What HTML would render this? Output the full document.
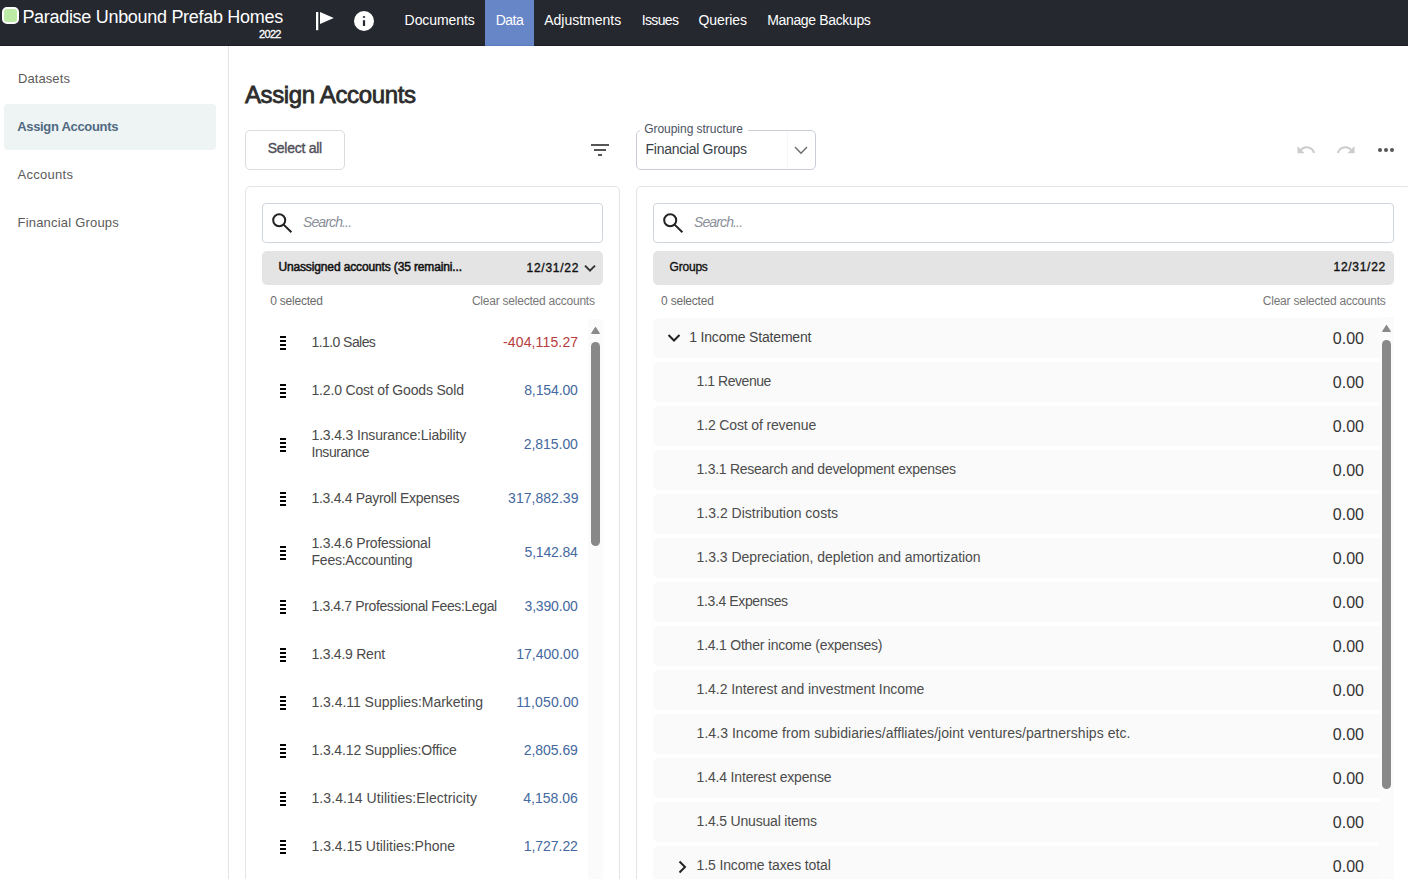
<!DOCTYPE html>
<html><head><meta charset="utf-8"><style>
html,body{margin:0;padding:0;width:1408px;height:879px;overflow:hidden;background:#fff;font-family:"Liberation Sans",sans-serif;}
.t{position:absolute;white-space:nowrap;line-height:1;}
.b{position:absolute;}
</style></head><body>
<div class="b" style="left:0px;top:0px;width:1408px;height:45px;background:#25282f;"></div>
<div class="b" style="left:0px;top:45px;width:1408px;height:1px;background:#1c1e25;"></div>
<div class="b" style="left:2px;top:7px;width:17px;height:17px;box-sizing:border-box;border:2px solid #fff;border-radius:5px;background:#bbeba4;"></div>
<div class="t" style="left:22.40px;top:8.10px;font-size:18px;color:#ffffff;letter-spacing:-0.300px;">Paradise Unbound Prefab Homes</div>
<div class="t" style="left:259.00px;top:29.00px;font-size:11px;color:#ffffff;-webkit-text-stroke:0.3px #ffffff;letter-spacing:-0.667px;">2022</div>
<svg class="b" style="left:310px;top:8px" width="30" height="26" viewBox="0 0 30 26"><rect x="6" y="4" width="2.3" height="18.2" fill="#fff"/><path d="M10 4 L23.8 9.9 L10 16 Z" fill="#fff"/></svg>
<svg class="b" style="left:352px;top:9px" width="24" height="24" viewBox="0 0 24 24"><circle cx="12" cy="12" r="10" fill="#fff"/><rect x="10.9" y="7.2" width="2.2" height="1.6" fill="#25282f"/><rect x="10.9" y="11.2" width="2.2" height="5.8" fill="#25282f"/></svg>
<div class="b" style="left:485px;top:0px;width:49px;height:46px;background:#6786c7;box-shadow:inset 0 -1px 0 #5b7bbf;"></div>
<div class="t" style="left:404.60px;top:13.00px;font-size:14px;color:#ffffff;letter-spacing:-0.075px;">Documents</div>
<div class="t" style="left:495.70px;top:13.00px;font-size:14px;color:#ffffff;letter-spacing:-0.500px;">Data</div>
<div class="t" style="left:544.20px;top:13.00px;font-size:14px;color:#ffffff;">Adjustments</div>
<div class="t" style="left:641.80px;top:13.00px;font-size:14px;color:#ffffff;letter-spacing:-0.660px;">Issues</div>
<div class="t" style="left:698.40px;top:13.00px;font-size:14px;color:#ffffff;letter-spacing:-0.067px;">Queries</div>
<div class="t" style="left:767.20px;top:13.00px;font-size:14px;color:#ffffff;letter-spacing:-0.346px;">Manage Backups</div>
<div class="b" style="left:228px;top:46px;width:1px;height:833px;background:#e3e3e3;"></div>
<div class="b" style="left:4px;top:104px;width:212px;height:46px;background:#eef3f4;border-radius:4px;"></div>
<div class="t" style="left:17.90px;top:71.70px;font-size:13px;color:#5b5b5b;letter-spacing:0.100px;">Datasets</div>
<div class="t" style="left:17.20px;top:119.60px;font-size:13px;color:#4f6a82;font-weight:700;letter-spacing:-0.321px;">Assign Accounts</div>
<div class="t" style="left:17.50px;top:168.20px;font-size:13px;color:#5b5b5b;letter-spacing:0.286px;">Accounts</div>
<div class="t" style="left:17.50px;top:216.00px;font-size:13px;color:#5b5b5b;letter-spacing:0.200px;">Financial Groups</div>
<div class="t" style="left:244.90px;top:83.00px;font-size:24px;color:#2c2c2c;-webkit-text-stroke:0.8px #2c2c2c;letter-spacing:-0.357px;">Assign Accounts</div>
<div class="b" style="left:245px;top:130px;width:100px;height:40px;box-sizing:border-box;border:1px solid #dcdcdc;border-radius:5px;background:#fff;"></div>
<div class="t" style="left:267.70px;top:141.00px;font-size:14px;color:#4e4e58;-webkit-text-stroke:0.35px #4e4e58;letter-spacing:-0.256px;">Select all</div>
<div class="b" style="left:591px;top:144px;width:18px;height:2px;background:#555;"></div>
<div class="b" style="left:594px;top:149px;width:12px;height:2px;background:#555;"></div>
<div class="b" style="left:598px;top:154px;width:4px;height:2px;background:#555;"></div>
<div class="b" style="left:636px;top:130px;width:180px;height:40px;box-sizing:border-box;border:1px solid #c9ced6;border-radius:5px;background:#fff;"></div>
<div class="b" style="left:640px;top:126px;width:108px;height:8px;background:#fff;"></div>
<div class="b" style="left:787px;top:131px;width:1px;height:38px;background:#f7f7f7;"></div>
<div class="t" style="left:644.20px;top:123.40px;font-size:12px;color:#4c5360;letter-spacing:-0.035px;">Grouping structure</div>
<div class="t" style="left:645.60px;top:141.60px;font-size:14px;color:#3a3f4a;letter-spacing:-0.293px;">Financial Groups</div>
<svg class="b" style="left:792px;top:144px" width="18" height="12" viewBox="0 0 18 12"><path d="M3 3 L9 9.2 L15 3" fill="none" stroke="#6b6b6b" stroke-width="1.4"/></svg>
<svg class="b" style="left:1295px;top:140px" width="22" height="16" viewBox="0 0 22 16"><path d="M2.5 6 L2.5 13.2 L9.5 13.2 Z" fill="#cccccc"/><path d="M5.5 10.5 A7.5 7.2 0 0 1 19 13" fill="none" stroke="#cccccc" stroke-width="2"/></svg>
<svg class="b" style="left:1335px;top:140px" width="22" height="16" viewBox="0 0 22 16"><path d="M19.5 6 L19.5 13.2 L12.5 13.2 Z" fill="#cccccc"/><path d="M16.5 10.5 A7.5 7.2 0 0 0 3 13" fill="none" stroke="#cccccc" stroke-width="2"/></svg>
<div class="b" style="left:1378px;top:148px;width:4px;height:4px;background:#555;border-radius:50%;"></div>
<div class="b" style="left:1384px;top:148px;width:4px;height:4px;background:#555;border-radius:50%;"></div>
<div class="b" style="left:1390px;top:148px;width:4px;height:4px;background:#555;border-radius:50%;"></div>
<div class="b" style="left:245px;top:186px;width:375px;height:720px;box-sizing:border-box;border:1px solid #e4e4e4;border-radius:5px;background:#fff;"></div>
<div class="b" style="left:262px;top:203px;width:341px;height:40px;box-sizing:border-box;border:1px solid #cfd5dc;border-radius:4px;background:#fff;"></div>
<svg class="b" style="left:270px;top:209px" width="24" height="26" viewBox="0 0 24 26"><circle cx="9.2" cy="11.2" r="6" fill="none" stroke="#222" stroke-width="2"/><path d="M13.6 15.6 L21.4 23.3" stroke="#222" stroke-width="2"/></svg>
<div class="t" style="left:303.00px;top:214.90px;font-size:14px;color:#8b909a;font-style:italic;letter-spacing:-0.875px;">Search...</div>
<div class="b" style="left:262px;top:251px;width:341px;height:34px;background:#e4e4e4;border-radius:5px;"></div>
<div class="b" style="left:636px;top:186px;width:775px;height:720px;box-sizing:border-box;border:1px solid #e4e4e4;border-radius:5px;background:#fff;"></div>
<div class="b" style="left:653px;top:203px;width:741px;height:40px;box-sizing:border-box;border:1px solid #cfd5dc;border-radius:4px;background:#fff;"></div>
<svg class="b" style="left:661px;top:209px" width="24" height="26" viewBox="0 0 24 26"><circle cx="9.2" cy="11.2" r="6" fill="none" stroke="#222" stroke-width="2"/><path d="M13.6 15.6 L21.4 23.3" stroke="#222" stroke-width="2"/></svg>
<div class="t" style="left:694.00px;top:214.90px;font-size:14px;color:#8b909a;font-style:italic;letter-spacing:-0.875px;">Search...</div>
<div class="b" style="left:653px;top:251px;width:741px;height:34px;background:#e4e4e4;border-radius:5px;"></div>
<div class="t" style="left:278.40px;top:260.80px;font-size:12px;color:#111111;-webkit-text-stroke:0.5px #111111;letter-spacing:-0.133px;">Unassigned accounts (35 remaini...</div>
<div class="t" style="left:526.60px;top:262.00px;font-size:12px;color:#111111;-webkit-text-stroke:0.35px #111111;letter-spacing:0.714px;">12/31/22</div>
<svg class="b" style="left:582px;top:262px" width="16" height="12" viewBox="0 0 16 12"><path d="M3 3.6 L8 8.6 L13 3.6" fill="none" stroke="#333" stroke-width="2"/></svg>
<div class="t" style="left:270.20px;top:294.80px;font-size:12px;color:#6b6b6b;letter-spacing:-0.222px;">0 selected</div>
<div class="t" style="left:471.90px;top:294.70px;font-size:12px;color:#777777;letter-spacing:-0.227px;">Clear selected accounts</div>
<div class="b" style="left:588px;top:319px;width:15px;height:560px;background:#fbfbfb;"></div>
<svg class="b" style="left:590px;top:325px" width="11" height="10" viewBox="0 0 11 10"><path d="M1.8 8.4 L5.5 2.6 L9.2 8.4 Z" fill="#8a8a8a" stroke="#8a8a8a" stroke-width="1.2" stroke-linejoin="round"/></svg>
<div class="b" style="left:591px;top:342px;width:9px;height:204px;background:#888;border-radius:4.5px;"></div>
<div class="t" style="left:311.50px;top:335.10px;font-size:14px;color:#4a4a4a;letter-spacing:-0.570px;">1.1.0 Sales</div>
<div class="t" style="left:503.00px;top:335.10px;font-size:14px;color:#b73c3c;letter-spacing:0.140px;">-404,115.27</div>
<div class="b" style="left:280px;top:336px;width:6px;height:2px;background:#000;"></div>
<div class="b" style="left:280px;top:340px;width:6px;height:2px;background:#000;"></div>
<div class="b" style="left:280px;top:344px;width:6px;height:2px;background:#000;"></div>
<div class="b" style="left:280px;top:348px;width:6px;height:2px;background:#000;"></div>
<div class="t" style="left:311.50px;top:382.90px;font-size:14px;color:#4a4a4a;letter-spacing:-0.174px;">1.2.0 Cost of Goods Sold</div>
<div class="t" style="left:524.20px;top:382.90px;font-size:14px;color:#4468a0;letter-spacing:-0.114px;">8,154.00</div>
<div class="b" style="left:280px;top:384px;width:6px;height:2px;background:#000;"></div>
<div class="b" style="left:280px;top:388px;width:6px;height:2px;background:#000;"></div>
<div class="b" style="left:280px;top:392px;width:6px;height:2px;background:#000;"></div>
<div class="b" style="left:280px;top:396px;width:6px;height:2px;background:#000;"></div>
<div class="t" style="left:311.50px;top:427.60px;font-size:14px;color:#4a4a4a;letter-spacing:-0.154px;">1.3.4.3 Insurance:Liability</div>
<div class="t" style="left:311.50px;top:444.60px;font-size:14px;color:#4a4a4a;letter-spacing:-0.425px;">Insurance</div>
<div class="t" style="left:523.80px;top:436.50px;font-size:14px;color:#4468a0;letter-spacing:-0.057px;">2,815.00</div>
<div class="b" style="left:280px;top:438px;width:6px;height:2px;background:#000;"></div>
<div class="b" style="left:280px;top:442px;width:6px;height:2px;background:#000;"></div>
<div class="b" style="left:280px;top:446px;width:6px;height:2px;background:#000;"></div>
<div class="b" style="left:280px;top:450px;width:6px;height:2px;background:#000;"></div>
<div class="t" style="left:311.50px;top:490.70px;font-size:14px;color:#4a4a4a;letter-spacing:-0.304px;">1.3.4.4 Payroll Expenses</div>
<div class="t" style="left:508.10px;top:490.70px;font-size:14px;color:#4468a0;letter-spacing:0.033px;">317,882.39</div>
<div class="b" style="left:280px;top:492px;width:6px;height:2px;background:#000;"></div>
<div class="b" style="left:280px;top:496px;width:6px;height:2px;background:#000;"></div>
<div class="b" style="left:280px;top:500px;width:6px;height:2px;background:#000;"></div>
<div class="b" style="left:280px;top:504px;width:6px;height:2px;background:#000;"></div>
<div class="t" style="left:311.50px;top:536.00px;font-size:14px;color:#4a4a4a;letter-spacing:-0.237px;">1.3.4.6 Professional</div>
<div class="t" style="left:311.50px;top:553.00px;font-size:14px;color:#4a4a4a;letter-spacing:-0.229px;">Fees:Accounting</div>
<div class="t" style="left:524.50px;top:544.60px;font-size:14px;color:#4468a0;letter-spacing:-0.157px;">5,142.84</div>
<div class="b" style="left:280px;top:546px;width:6px;height:2px;background:#000;"></div>
<div class="b" style="left:280px;top:550px;width:6px;height:2px;background:#000;"></div>
<div class="b" style="left:280px;top:554px;width:6px;height:2px;background:#000;"></div>
<div class="b" style="left:280px;top:558px;width:6px;height:2px;background:#000;"></div>
<div class="t" style="left:311.50px;top:598.50px;font-size:14px;color:#4a4a4a;letter-spacing:-0.373px;">1.3.4.7 Professional Fees:Legal</div>
<div class="t" style="left:524.50px;top:598.50px;font-size:14px;color:#4468a0;letter-spacing:-0.157px;">3,390.00</div>
<div class="b" style="left:280px;top:600px;width:6px;height:2px;background:#000;"></div>
<div class="b" style="left:280px;top:604px;width:6px;height:2px;background:#000;"></div>
<div class="b" style="left:280px;top:608px;width:6px;height:2px;background:#000;"></div>
<div class="b" style="left:280px;top:612px;width:6px;height:2px;background:#000;"></div>
<div class="t" style="left:311.50px;top:646.60px;font-size:14px;color:#4a4a4a;letter-spacing:-0.245px;">1.3.4.9 Rent</div>
<div class="t" style="left:516.20px;top:646.60px;font-size:14px;color:#4468a0;letter-spacing:0.025px;">17,400.00</div>
<div class="b" style="left:280px;top:648px;width:6px;height:2px;background:#000;"></div>
<div class="b" style="left:280px;top:652px;width:6px;height:2px;background:#000;"></div>
<div class="b" style="left:280px;top:656px;width:6px;height:2px;background:#000;"></div>
<div class="b" style="left:280px;top:660px;width:6px;height:2px;background:#000;"></div>
<div class="t" style="left:311.50px;top:694.60px;font-size:14px;color:#4a4a4a;letter-spacing:-0.038px;">1.3.4.11 Supplies:Marketing</div>
<div class="t" style="left:516.20px;top:694.60px;font-size:14px;color:#4468a0;letter-spacing:0.150px;">11,050.00</div>
<div class="b" style="left:280px;top:696px;width:6px;height:2px;background:#000;"></div>
<div class="b" style="left:280px;top:700px;width:6px;height:2px;background:#000;"></div>
<div class="b" style="left:280px;top:704px;width:6px;height:2px;background:#000;"></div>
<div class="b" style="left:280px;top:708px;width:6px;height:2px;background:#000;"></div>
<div class="t" style="left:311.50px;top:742.60px;font-size:14px;color:#4a4a4a;letter-spacing:-0.130px;">1.3.4.12 Supplies:Office</div>
<div class="t" style="left:523.80px;top:742.60px;font-size:14px;color:#4468a0;letter-spacing:-0.057px;">2,805.69</div>
<div class="b" style="left:280px;top:744px;width:6px;height:2px;background:#000;"></div>
<div class="b" style="left:280px;top:748px;width:6px;height:2px;background:#000;"></div>
<div class="b" style="left:280px;top:752px;width:6px;height:2px;background:#000;"></div>
<div class="b" style="left:280px;top:756px;width:6px;height:2px;background:#000;"></div>
<div class="t" style="left:311.50px;top:790.60px;font-size:14px;color:#4a4a4a;letter-spacing:0.069px;">1.3.4.14 Utilities:Electricity</div>
<div class="t" style="left:523.30px;top:790.60px;font-size:14px;color:#4468a0;letter-spacing:0.014px;">4,158.06</div>
<div class="b" style="left:280px;top:792px;width:6px;height:2px;background:#000;"></div>
<div class="b" style="left:280px;top:796px;width:6px;height:2px;background:#000;"></div>
<div class="b" style="left:280px;top:800px;width:6px;height:2px;background:#000;"></div>
<div class="b" style="left:280px;top:804px;width:6px;height:2px;background:#000;"></div>
<div class="t" style="left:311.50px;top:838.60px;font-size:14px;color:#4a4a4a;letter-spacing:-0.022px;">1.3.4.15 Utilities:Phone</div>
<div class="t" style="left:523.80px;top:838.60px;font-size:14px;color:#4468a0;letter-spacing:-0.057px;">1,727.22</div>
<div class="b" style="left:280px;top:840px;width:6px;height:2px;background:#000;"></div>
<div class="b" style="left:280px;top:844px;width:6px;height:2px;background:#000;"></div>
<div class="b" style="left:280px;top:848px;width:6px;height:2px;background:#000;"></div>
<div class="b" style="left:280px;top:852px;width:6px;height:2px;background:#000;"></div>
<div class="t" style="left:669.50px;top:260.70px;font-size:12px;color:#111111;-webkit-text-stroke:0.35px #111111;letter-spacing:-0.200px;">Groups</div>
<div class="t" style="left:1333.50px;top:260.80px;font-size:12px;color:#111111;-webkit-text-stroke:0.35px #111111;letter-spacing:0.714px;">12/31/22</div>
<div class="t" style="left:661.10px;top:294.80px;font-size:12px;color:#6b6b6b;letter-spacing:-0.222px;">0 selected</div>
<div class="t" style="left:1262.80px;top:294.70px;font-size:12px;color:#777777;letter-spacing:-0.227px;">Clear selected accounts</div>
<div class="b" style="left:1379px;top:317px;width:15px;height:562px;background:#fbfbfb;"></div>
<svg class="b" style="left:1381px;top:323px" width="11" height="10" viewBox="0 0 11 10"><path d="M1.8 8.4 L5.5 2.6 L9.2 8.4 Z" fill="#8a8a8a" stroke="#8a8a8a" stroke-width="1.2" stroke-linejoin="round"/></svg>
<div class="b" style="left:1382px;top:340px;width:9px;height:449px;background:#888;border-radius:4.5px;"></div>
<div class="b" style="left:653px;top:318px;width:726px;height:40px;background:#fafafa;border-radius:6px 0 0 6px;"></div>
<div class="t" style="left:689.20px;top:330.00px;font-size:14px;color:#444444;letter-spacing:-0.176px;">1 Income Statement</div>
<svg class="b" style="left:664px;top:330px" width="20" height="16" viewBox="0 0 20 16"><path d="M4.5 5 L10 10.5 L15.5 5" fill="none" stroke="#222" stroke-width="2"/></svg>
<div class="t" style="left:1332.80px;top:330.80px;font-size:16px;color:#333333;">0.00</div>
<div class="b" style="left:653px;top:362px;width:726px;height:40px;background:#fafafa;border-radius:6px 0 0 6px;"></div>
<div class="t" style="left:696.60px;top:374.00px;font-size:14px;color:#4c4c4c;letter-spacing:-0.460px;">1.1 Revenue</div>
<div class="t" style="left:1332.80px;top:374.80px;font-size:16px;color:#333333;">0.00</div>
<div class="b" style="left:653px;top:406px;width:726px;height:40px;background:#fafafa;border-radius:6px 0 0 6px;"></div>
<div class="t" style="left:696.60px;top:418.00px;font-size:14px;color:#4c4c4c;letter-spacing:-0.144px;">1.2 Cost of revenue</div>
<div class="t" style="left:1332.80px;top:418.80px;font-size:16px;color:#333333;">0.00</div>
<div class="b" style="left:653px;top:450px;width:726px;height:40px;background:#fafafa;border-radius:6px 0 0 6px;"></div>
<div class="t" style="left:696.60px;top:462.00px;font-size:14px;color:#4c4c4c;letter-spacing:-0.279px;">1.3.1 Research and development expenses</div>
<div class="t" style="left:1332.80px;top:462.80px;font-size:16px;color:#333333;">0.00</div>
<div class="b" style="left:653px;top:494px;width:726px;height:40px;background:#fafafa;border-radius:6px 0 0 6px;"></div>
<div class="t" style="left:696.60px;top:506.00px;font-size:14px;color:#4c4c4c;letter-spacing:-0.009px;">1.3.2 Distribution costs</div>
<div class="t" style="left:1332.80px;top:506.80px;font-size:16px;color:#333333;">0.00</div>
<div class="b" style="left:653px;top:538px;width:726px;height:40px;background:#fafafa;border-radius:6px 0 0 6px;"></div>
<div class="t" style="left:696.60px;top:550.00px;font-size:14px;color:#4c4c4c;letter-spacing:-0.036px;">1.3.3 Depreciation, depletion and amortization</div>
<div class="t" style="left:1332.80px;top:550.80px;font-size:16px;color:#333333;">0.00</div>
<div class="b" style="left:653px;top:582px;width:726px;height:40px;background:#fafafa;border-radius:6px 0 0 6px;"></div>
<div class="t" style="left:696.60px;top:594.00px;font-size:14px;color:#4c4c4c;letter-spacing:-0.385px;">1.3.4 Expenses</div>
<div class="t" style="left:1332.80px;top:594.80px;font-size:16px;color:#333333;">0.00</div>
<div class="b" style="left:653px;top:626px;width:726px;height:40px;background:#fafafa;border-radius:6px 0 0 6px;"></div>
<div class="t" style="left:696.60px;top:638.00px;font-size:14px;color:#4c4c4c;letter-spacing:-0.229px;">1.4.1 Other income (expenses)</div>
<div class="t" style="left:1332.80px;top:638.80px;font-size:16px;color:#333333;">0.00</div>
<div class="b" style="left:653px;top:670px;width:726px;height:40px;background:#fafafa;border-radius:6px 0 0 6px;"></div>
<div class="t" style="left:696.60px;top:682.00px;font-size:14px;color:#4c4c4c;letter-spacing:-0.074px;">1.4.2 Interest and investment Income</div>
<div class="t" style="left:1332.80px;top:682.80px;font-size:16px;color:#333333;">0.00</div>
<div class="b" style="left:653px;top:714px;width:726px;height:40px;background:#fafafa;border-radius:6px 0 0 6px;"></div>
<div class="t" style="left:696.60px;top:726.00px;font-size:14px;color:#4c4c4c;letter-spacing:0.052px;">1.4.3 Income from subidiaries/affliates/joint ventures/partnerships etc.</div>
<div class="t" style="left:1332.80px;top:726.80px;font-size:16px;color:#333333;">0.00</div>
<div class="b" style="left:653px;top:758px;width:726px;height:40px;background:#fafafa;border-radius:6px 0 0 6px;"></div>
<div class="t" style="left:696.60px;top:770.00px;font-size:14px;color:#4c4c4c;letter-spacing:-0.171px;">1.4.4 Interest expense</div>
<div class="t" style="left:1332.80px;top:770.80px;font-size:16px;color:#333333;">0.00</div>
<div class="b" style="left:653px;top:802px;width:726px;height:40px;background:#fafafa;border-radius:6px 0 0 6px;"></div>
<div class="t" style="left:696.60px;top:814.00px;font-size:14px;color:#4c4c4c;letter-spacing:-0.183px;">1.4.5 Unusual items</div>
<div class="t" style="left:1332.80px;top:814.80px;font-size:16px;color:#333333;">0.00</div>
<div class="b" style="left:653px;top:846px;width:726px;height:40px;background:#fafafa;border-radius:6px 0 0 6px;"></div>
<div class="t" style="left:696.60px;top:858.00px;font-size:14px;color:#4c4c4c;letter-spacing:-0.133px;">1.5 Income taxes total</div>
<svg class="b" style="left:674px;top:857.5px" width="16" height="20" viewBox="0 0 16 20"><path d="M5.5 3.5 L11 9 L5.5 14.5" fill="none" stroke="#222" stroke-width="2"/></svg>
<div class="t" style="left:1332.80px;top:858.80px;font-size:16px;color:#333333;">0.00</div>
</body></html>
